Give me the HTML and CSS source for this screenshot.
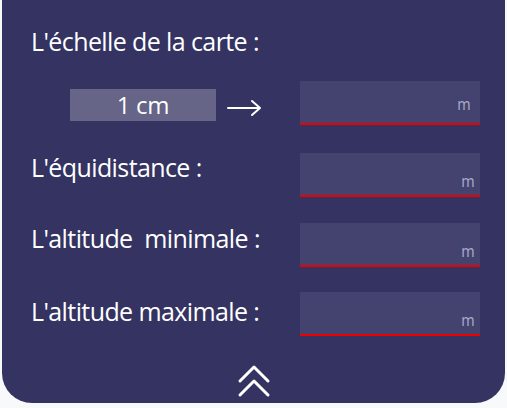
FILE: index.html
```html
<!DOCTYPE html>
<html lang="fr">
<head>
<meta charset="utf-8">
<link rel="stylesheet" href="styles.css">
</head>
<body>
<div class="panel">
  <div class="label title">L'échelle de la carte :</div>
  <div class="row scale-row gap28">
    <div class="scale-box">1 cm</div>
    <svg class="arrow" width="36" height="18" viewBox="0 0 36 18">
      <path d="M1 9 H33 M25 2 L33 9 L25 16" fill="none" stroke="#fff" stroke-width="2" stroke-linecap="round" stroke-linejoin="round"/>
    </svg>
    <div class="field first"><span class="unit">m</span></div>
  </div>
  <div class="row gap26">
    <div class="label up8">L'équidistance :</div>
    <div class="field"><span class="unit">m</span></div>
  </div>
  <div class="row gap25">
    <div class="label up7">L'altitude&nbsp; minimale :</div>
    <div class="field"><span class="unit">m</span></div>
  </div>
  <div class="row gap28">
    <div class="label up3">L'altitude maximale :</div>
    <div class="field"><span class="unit">m</span></div>
  </div>
  <div class="footer">
    <svg class="chevrons" width="34" height="36" viewBox="0 0 34 36">
      <path d="M3 18 L17 4 L31 18 M3 32 L17 18 L31 32" fill="none" stroke="#fff" stroke-width="3" stroke-linecap="round" stroke-linejoin="round"/>
    </svg>
  </div>
</div>
</body>
</html>
```
FILE: styles.css
```css
html, body {
  margin: 0;
  padding: 0;
  background: #f8f9fb;
}
body {
  font-family: "Open Sans", "Noto Sans", sans-serif;
  width: 507px;
  height: 408px;
  overflow: hidden;
}
.panel {
  margin-left: 2px;
  width: 503px;
  height: 403px;
  background: #343362;
  border-radius: 0 0 30px 30px;
  box-sizing: border-box;
  padding: 24px 0 0 29px;
  display: flex;
  flex-direction: column;
  color: #fff;
}
.label {
  font-size: 25px;
  line-height: 34px;
  white-space: nowrap;
  letter-spacing: -0.6px;
}
.title {
  margin-bottom: 23px;
}
.row {
  display: flex;
  align-items: center;
  height: 44px;
}
.gap28 { margin-bottom: 28px; }
.gap26 { margin-bottom: 26px; }
.gap25 { margin-bottom: 25px; }
.row .label {
  width: 269px;
}
.up8 { margin-bottom: 16px; }
.up7 { margin-bottom: 14px; }
.up3 { margin-bottom: 6px; }
.scale-row {
  padding-left: 39px;
}
.scale-box {
  width: 146px;
  height: 32px;
  margin-top: 4px;
  background: #666487;
  font-size: 24px;
  line-height: 32px;
  text-align: center;
  letter-spacing: -0.3px;
}
.arrow {
  margin-left: 11px;
  margin-top: 10px;
  margin-right: 37px;
}
.field {
  width: 175px;
  height: 42px;
  background: #444370;
  border-bottom: 2px solid #ee0000;
  display: flex;
  justify-content: flex-end;
  align-items: flex-end;
  padding-right: 5px;
}
.field .unit {
  font-size: 17px;
  line-height: 17px;
  color: #adadcb;
  margin-bottom: 6px;
  display: inline-block;
  transform: scaleX(0.85);
  transform-origin: right bottom;
}
.field.first {
  width: 171px;
  padding-right: 9px;
}
.field.first .unit {
  margin-bottom: 11px;
}
.footer {
  display: flex;
  justify-content: center;
  padding-right: 29px;
  margin-top: -1px;
}
```
